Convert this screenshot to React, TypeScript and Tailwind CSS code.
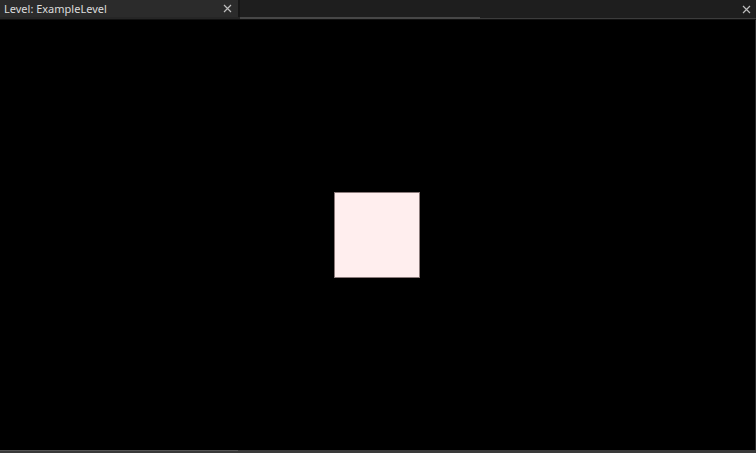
export default function App() {
  return (
    <div
      className="w-[756px] h-[453px] bg-black flex flex-col overflow-hidden"
      style={{ fontFamily: '"Noto Sans", "Open Sans", sans-serif' }}
    >
      {/* Tab header */}
      <div className="h-[20px] flex flex-col bg-[#1e1e1e]">
        <div className="h-[17px] flex">
          <div className="w-[238px] bg-[#2b2b2b] flex items-center pl-[4px] pr-[6px]">
            <span className="text-[11px] leading-[17px] text-[#dcdcdc] flex-1 whitespace-nowrap">Level: ExampleLevel</span>
            <CloseIcon />
          </div>
          <div className="w-[2px] bg-[#161616]" />
          <div className="flex-1 flex items-center justify-end pr-[5px] pt-[2px]">
            <CloseIcon />
          </div>
        </div>
        <div className="h-[3px] flex flex-col">
          <div className="h-[1px] flex">
            <div className="w-[240px] bg-[#262626]" />
            <div className="w-[240px] bg-[#474747]" />
            <div className="flex-1" />
          </div>
          <div className="h-[1px] flex">
            <div className="w-[240px] bg-[#262626]" />
            <div className="w-[240px] bg-[#474747]" />
            <div className="flex-1 bg-[#3c3c3c]" />
          </div>
          <div className="h-[1px] bg-[#111]" />
        </div>
      </div>

      {/* Viewport */}
      <div className="flex-1 flex items-center justify-center border-r border-[#2a2a2a]">
        <div className="w-[86px] h-[86px] bg-[#ffeeee] border border-[#8a7a7a] mr-[2px]" />
      </div>

      {/* Bottom edge */}
      <div className="h-[3px] flex flex-col">
        <div className="h-[1px] flex">
          <div className="w-[238px] bg-[#555]" />
          <div className="flex-1 bg-[#3a3a3a]" />
        </div>
        <div className="h-[2px] bg-[#3a3a3a]" />
      </div>
    </div>
  );
}

function CloseIcon() {
  return (
    <svg width="9" height="9" viewBox="0 0 9 9" className="shrink-0">
      <path d="M1 1 L8 8 M8 1 L1 8" stroke="#bdbdbd" strokeWidth="1.2" fill="none" />
    </svg>
  );
}
